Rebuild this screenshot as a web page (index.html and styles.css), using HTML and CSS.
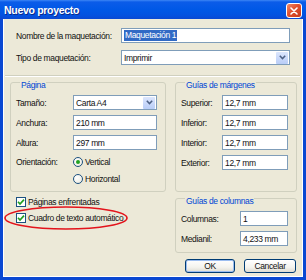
FILE: index.html
```html
<!DOCTYPE html>
<html lang="es">
<head>
<meta charset="utf-8">
<title>Nuevo proyecto</title>
<link rel="stylesheet" href="styles.css">
</head>
<body>
<div class="window">
  <div class="titlebar">
    <span class="title">Nuevo proyecto</span>
    <span class="close"><svg width="8" height="8" viewBox="0 0 8 8"><path d="M1 1L7 7M7 1L1 7" stroke="#fff" stroke-width="1.6" stroke-linecap="round"/></svg></span>
  </div>
  <div class="frame">
    <div class="toprow">
      <span class="toplabel">Nombre de la maquetación:</span>
      <span class="field topfield"><span class="selected">Maquetación 1</span></span>
    </div>
    <div class="toprow second">
      <span class="toplabel">Tipo de maquetación:</span>
      <span class="field topfield combo"><span class="value">Imprimir</span><span class="arrow"><svg width="7" height="5" viewBox="0 0 7 5"><path d="M0.8 0.8L3.5 3.6L6.2 0.8" fill="none" stroke="#4d6185" stroke-width="1.5"/></svg></span></span>
    </div>
    <div class="separator"></div>
    <div class="columns">
      <div class="group pagina">
        <div class="legend">Página</div>
        <div class="frow"><span class="flabel">Tamaño:</span><span class="field combo pfield"><span class="value">Carta A4</span><span class="arrow"><svg width="7" height="5" viewBox="0 0 7 5"><path d="M0.8 0.8L3.5 3.6L6.2 0.8" fill="none" stroke="#4d6185" stroke-width="1.5"/></svg></span></span></div>
        <div class="frow"><span class="flabel">Anchura:</span><span class="field pfield">210 mm</span></div>
        <div class="frow"><span class="flabel">Altura:</span><span class="field pfield">297 mm</span></div>
        <div class="radiorow first"><span class="flabel">Orientación:</span><span class="radio checked"></span><span>Vertical</span></div>
        <div class="radiorow"><span class="flabel"></span><span class="radio"></span><span>Horizontal</span></div>
      </div>
      <div class="group margenes">
        <div class="legend">Guías de márgenes</div>
        <div class="frow"><span class="mlabel">Superior:</span><span class="field mfield">12,7 mm</span></div>
        <div class="frow"><span class="mlabel">Inferior:</span><span class="field mfield">12,7 mm</span></div>
        <div class="frow"><span class="mlabel">Interior:</span><span class="field mfield">12,7 mm</span></div>
        <div class="frow"><span class="mlabel">Exterior:</span><span class="field mfield">12,7 mm</span></div>
      </div>
      <div class="checks">
        <div class="checkrow"><span class="checkbox"><svg width="8" height="8" viewBox="0 0 8 8"><path d="M1 3.8L3 6L7 1.6" fill="none" stroke="#21a121" stroke-width="1.7"/></svg></span><span>Páginas enfrentadas</span></div>
        <div class="checkrow"><span class="checkbox"><svg width="8" height="8" viewBox="0 0 8 8"><path d="M1 3.8L3 6L7 1.6" fill="none" stroke="#21a121" stroke-width="1.7"/></svg></span><span>Cuadro de texto automático</span></div>
      </div>
      <div class="rightbottom">
        <div class="group columnas">
          <div class="legend">Guías de columnas</div>
          <div class="frow"><span class="clabel">Columnas:</span><span class="field cfield">1</span></div>
          <div class="frow"><span class="clabel">Medianil:</span><span class="field cfield">4,233 mm</span></div>
        </div>
        <div class="buttons">
          <span class="button default">OK</span>
          <span class="button cancel">Cancelar</span>
        </div>
      </div>
    </div>
  </div>
  <svg class="highlight" width="126" height="26" viewBox="0 0 126 26"><ellipse cx="63" cy="13" rx="61" ry="11" fill="none" stroke="#e3141c" stroke-width="1.6"/></svg>
</div>
</body>
</html>
```
FILE: styles.css
```css
* { box-sizing: border-box; margin: 0; padding: 0; }
html, body { width: 306px; height: 280px; overflow: hidden; background: #fff; }
body {
  font-family: "Liberation Sans", Arial, sans-serif;
  font-size: 8.5px;
  letter-spacing: -0.35px;
  color: #111;
  white-space: nowrap;
}
.window {
  position: relative;
  width: 306px;
  height: 280px;
  display: flex;
  flex-direction: column;
}
.titlebar {
  height: 19px;
  flex: none;
  display: flex;
  align-items: center;
  justify-content: space-between;
  padding: 0 4px 0 4px;
  background: linear-gradient(#3d86f5 0, #0b5ce9 2px, #0058e6 50%, #0352e0 80%, #0a48d2 100%);
}
.title {
  color: #fff;
  font-weight: bold;
  font-size: 10.5px;
  letter-spacing: -0.3px;
  text-shadow: 1px 1px 0 #0a2a8a;
  margin-top: 1px;
}
.close {
  width: 16px;
  height: 15px;
  margin-top: 2px;
  border: 1px solid #fff;
  border-radius: 3px;
  background: linear-gradient(135deg, #f08a6a 0, #e0502f 45%, #c63a1c 100%);
  display: flex;
  align-items: center;
  justify-content: center;
}
.frame {
  flex: 1;
  background: #ece9d8;
  border: 3px solid #0a48d2;
  border-top: 0;
  padding-top: 9px;
  box-shadow: inset 1px 0 0 #fff, inset -1px 0 0 #fff, inset 0 -1px 0 #fff;
}
.toprow {
  display: flex;
  align-items: center;
  height: 15px;
  margin-left: 13px;
}
.toprow.second { margin-top: 7px; }
.toplabel { width: 105px; flex: none; }
.field {
  display: flex;
  align-items: center;
  height: 15px;
  background: #fff;
  border: 1px solid #7f9db9;
  padding-left: 2px;
  overflow: hidden;
}
.topfield { width: 169px; }
.selected { background: #316ac5; color: #fff; padding: 0 1px; line-height: 11px; }
.combo { justify-content: space-between; padding-right: 1px; }
.arrow {
  width: 12px;
  height: 12px;
  background: linear-gradient(#dce6fd, #b9cdf7);
  border-radius: 1px;
  display: flex;
  align-items: center;
  justify-content: center;
}
.separator {
  height: 2px;
  margin: 10px 3px 0 2px;
  border-top: 1px solid #d0d0bf;
  border-bottom: 1px solid #fff;
}
.columns {
  display: grid;
  grid-template-columns: 156px 122px;
  column-gap: 9px;
  row-gap: 6px;
  margin: 5px 0 0 7px;
}
.group {
  border: 1px solid #d0d0bf;
  border-radius: 3px;
}
.legend {
  color: #0046d5;
  background: #ece9d8;
  width: fit-content;
  height: 12px;
  line-height: 12px;
  margin: -4px 0 0 4px;
  padding: 0 1px;
}
.frow {
  display: flex;
  align-items: center;
  height: 15px;
  margin-top: 5px;
}
.legend + .frow { margin-top: 4px; }
.pagina { padding: 0 6px 6px 5px; }
.flabel { width: 57px; flex: none; }
.pfield { width: 84px; }
.radiorow {
  display: flex;
  align-items: center;
  height: 12px;
  margin-top: 5px;
}
.radiorow.first { margin-top: 6px; }
.radio {
  width: 10px;
  height: 10px;
  border: 1px solid #1c5180;
  border-radius: 50%;
  background: radial-gradient(circle at 35% 35%, #fff 0, #f2f1ea 60%, #dcd9c8 100%);
  margin-right: 2px;
  display: flex;
  align-items: center;
  justify-content: center;
}
.radio.checked::after {
  content: "";
  width: 4px;
  height: 4px;
  border-radius: 50%;
  background: #21a121;
}
.margenes { padding: 0 8px 6px 5px; }
.mlabel { width: 41px; flex: none; }
.mfield { width: 66px; }
.checks { padding-left: 6px; margin-top: -2px; }
.checkrow {
  display: flex;
  align-items: center;
  height: 11px;
  margin-bottom: 5px;
}
.checkbox {
  width: 10px;
  height: 10px;
  border: 1px solid #1c5180;
  background: #fff;
  margin-right: 2px;
  display: flex;
  align-items: center;
  justify-content: center;
}
.columnas { padding: 0 8px 6px 5px; }
.clabel { width: 59px; flex: none; }
.cfield { width: 48px; }
.buttons {
  display: flex;
  justify-content: flex-end;
  gap: 9px;
  margin: 6px 1px 0 0;
}
.button {
  height: 14px;
  border: 1px solid #003c74;
  border-radius: 3px;
  background: linear-gradient(#fff, #f4f3ee 60%, #dedcd2);
  display: flex;
  align-items: center;
  justify-content: center;
}
.button.default { width: 50px; box-shadow: inset 0 0 0 1px #9cbdf0; }
.button.cancel { width: 52px; }
.highlight {
  position: absolute;
  left: 3px;
  top: 205px;
}
```
